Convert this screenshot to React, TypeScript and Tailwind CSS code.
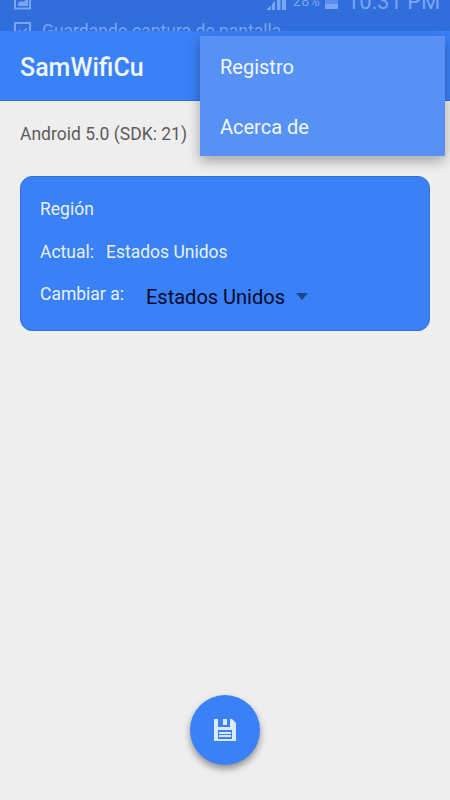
import React from "react";

const StatusBar = () => {
  return (
    <div className="relative h-[31px] shrink-0 overflow-hidden bg-[#306edb] text-[#79a5f3]">
      <svg className="absolute left-[14px] top-0" width="18" height="10" viewBox="0 0 18 10" fill="none">
        <path d="M1 0v8.500h15V0" stroke="#79a5f3" strokeWidth="2" />
        <path d="M4 6V3l3-2 2 1 3-2h2v6z" fill="#79a5f3" />
      </svg>
      <svg className="absolute left-[266px] top-0" width="20" height="10" viewBox="0 0 20 10" fill="#79a5f3">
        <path d="M0 10l5-4.500v4.500zM6 4l3-3v9H6zM11 0h3.500v10H11zM16 0h4v10h-4z" />
      </svg>
      <span className="absolute left-[293px] top-[-7px] text-[14.500px] leading-[18px]">28%</span>
      <div className="absolute left-[325px] top-0 h-[9px] w-[13px] bg-[#5a8eea]">
        <div className="mt-[4px] h-[5px] bg-[#79a5f3]"></div>
      </div>
      <span className="absolute left-[347px] top-[-12px] whitespace-nowrap text-[22px] leading-[28px]">
        10:31 PM
      </span>
      <svg className="absolute left-[14px] top-[22px]" width="18" height="9" viewBox="0 0 18 9" fill="none">
        <path d="M1 9V1h15v8" stroke="#79a5f3" strokeWidth="2" />
        <path d="M5 8l3 3 5-4.500" stroke="#79a5f3" strokeWidth="1.500" />
      </svg>
      <span className="absolute left-[42px] top-[19px] whitespace-nowrap text-[17.500px] leading-[24px]">
        Guardando captura de pantalla
      </span>
    </div>
  );
};

const Menu = () => {
  return (
    <div className="absolute left-[200px] top-[36px] h-[120px] w-[245px] bg-[#5891f5] text-[20px] text-[#f0f7ff] shadow-[0_5px_12px_rgba(0,0,0,0.32)]">
      <div className="flex h-[60px] items-center px-5 pt-[2px]">Registro</div>
      <div className="flex h-[60px] items-center px-5 pt-[2px]">Acerca de</div>
    </div>
  );
};

const RegionCard = () => {
  return (
    <div className="mx-5 mt-[30px] h-[155px] rounded-[12px] border border-[#2f70dd] bg-[#3a80f6] px-[19px] pt-[20px] text-[17.500px] leading-6 text-[#e6f2ff]">
      <div>Región</div>
      <div className="mt-[19px] flex gap-[12px]">
        <span>Actual:</span>
        <span>Estados Unidos</span>
      </div>
      <div className="mt-[18px] flex">
        <span className="w-[106px]">Cambiar a:</span>
        <button className="flex h-[30px] items-center gap-[11px] text-[20px] text-[#050a2c]">
          Estados Unidos
          <svg className="-mt-[2px]" width="12" height="7" viewBox="0 0 12 7" fill="#1d4791">
            <path d="M0 0h12L6 7z" />
          </svg>
        </button>
      </div>
    </div>
  );
};

const SaveButton = () => {
  return (
    <button className="mx-auto mb-[35px] mt-auto flex h-[70px] w-[70px] items-center justify-center rounded-full bg-[#3a80f6] shadow-[0_4px_7px_rgba(0,0,0,0.4)]">
      <svg width="22" height="22" viewBox="0 0 22 22" fill="#d9eaff">
        <path fillRule="evenodd" d="M0 0h4v8h12V0h2l4 4v18H0zM4 11v9h14v-9z" />
        <path d="M9 0h4v6H9zM5 13h12v2H5zM5 16h12v2H5z" />
      </svg>
    </button>
  );
};

export default function App() {
  return (
    <div className="relative flex h-[800px] w-[450px] flex-col overflow-hidden bg-[#eeeeee] font-[Roboto,sans-serif]">
      <StatusBar />
      <div className="flex h-[70px] shrink-0 items-center border-b border-[#3070dc] bg-[#3a80f6] px-5 pt-[5px] text-[25px] font-medium text-[#f0f7ff]">
        SamWifiCu
      </div>
      <div className="mt-[21px] px-5 text-[17.500px] leading-6 text-[#5c5c5c]">Android 5.0 (SDK: 21)</div>
      <RegionCard />
      <SaveButton />
      <Menu />
    </div>
  );
}
